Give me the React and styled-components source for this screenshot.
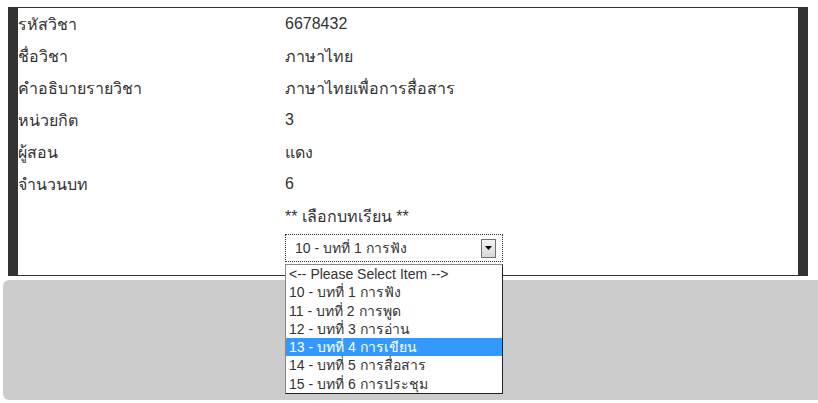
import React from "react";
import styled, { createGlobalStyle } from "styled-components";

const GlobalStyle = createGlobalStyle`
  body {
    margin: 0;
    overflow: hidden;
    background: #fff;
    font-family: "Liberation Sans", "Noto Sans", sans-serif;
  }
`;

const Page = styled.div`
  padding-top: 7px;
  width: 818px;
`;

const Panel = styled.div`
  margin-left: 8px;
  width: 800px;
  box-sizing: border-box;
  background: #fff;
  border-top: 1px solid #333;
  border-bottom: 1px solid #333;
  border-left: 10px solid #333;
  border-right: 10px solid #333;
  padding-bottom: 13px;
`;

const Row = styled.div`
  display: grid;
  grid-template-columns: 267px 1fr;
  height: 32px;
  align-items: center;
  font-size: 16px;
  color: #333;
`;

const SelectRow = styled.div`
  display: grid;
  grid-template-columns: 267px 1fr;
  padding-top: 2px;
`;

const SelectWrap = styled.div`
  position: relative;
  width: 218px;
`;

const SelectBox = styled.div`
  box-sizing: border-box;
  height: 28px;
  border: 1px dotted #333;
  display: flex;
  align-items: center;
  justify-content: space-between;
  padding: 0 6px 0 9px;
  font-size: 14px;
  color: #333;
  background: #fff;
`;

const ArrowButton = styled.div`
  width: 15px;
  height: 19px;
  box-sizing: border-box;
  border: 1px solid #707070;
  background: linear-gradient(#f2f2f2, #d8d8d8);
  display: flex;
  align-items: center;
  justify-content: center;
`;

const ListBox = styled.ul`
  position: absolute;
  top: 30px;
  left: 0;
  width: 218px;
  box-sizing: border-box;
  margin: 0;
  padding: 0;
  list-style: none;
  background: #fff;
  border: 1px solid #222;
  border-top-color: #888;
  border-left-color: #888;
  z-index: 2;
`;

const Option = styled.li`
  height: 18.3px;
  line-height: 18.3px;
  padding-left: 3px;
  font-size: 14px;
  white-space: nowrap;
  color: ${(p) => (p.$active ? "#fff" : "#333")};
  background: ${(p) => (p.$active ? "#3399ff" : "transparent")};
`;

const Footer = styled.div`
  margin-top: 4px;
  margin-left: 3px;
  width: 830px;
  height: 120px;
  background: #cccccc;
  border-radius: 6px;
`;

const details = [
  ["รหัสวิชา", "6678432"],
  ["ชื่อวิชา", "ภาษาไทย"],
  ["คำอธิบายรายวิชา", "ภาษาไทยเพื่อการสื่อสาร"],
  ["หน่วยกิต", "3"],
  ["ผู้สอน", "แดง"],
  ["จำนวนบท", "6"],
  ["", "** เลือกบทเรียน **"],
];

const options = [
  "<-- Please Select Item -->",
  "10 - บทที่ 1 การฟัง",
  "11 - บทที่ 2 การพูด",
  "12 - บทที่ 3 การอ่าน",
  "13 - บทที่ 4 การเขียน",
  "14 - บทที่ 5 การสื่อสาร",
  "15 - บทที่ 6 การประชุม",
];

const App = () => {
  return (
    <>
      <GlobalStyle />
      <Page>
        <Panel>
          {details.map(([label, value], i) => (
            <Row key={i}>
              <span>{label}</span>
              <span>{value}</span>
            </Row>
          ))}
          <SelectRow>
            <span />
            <SelectWrap>
              <SelectBox>
                <span>10 - บทที่ 1 การฟัง</span>
                <ArrowButton>
                  <svg width="7" height="4" viewBox="0 0 7 4">
                    <path d="M0 0h7L3.5 4z" fill="#000" />
                  </svg>
                </ArrowButton>
              </SelectBox>
              <ListBox>
                {options.map((o, i) => (
                  <Option key={o} $active={i === 4}>
                    {o}
                  </Option>
                ))}
              </ListBox>
            </SelectWrap>
          </SelectRow>
        </Panel>
        <Footer />
      </Page>
    </>
  );
};

export default App;
